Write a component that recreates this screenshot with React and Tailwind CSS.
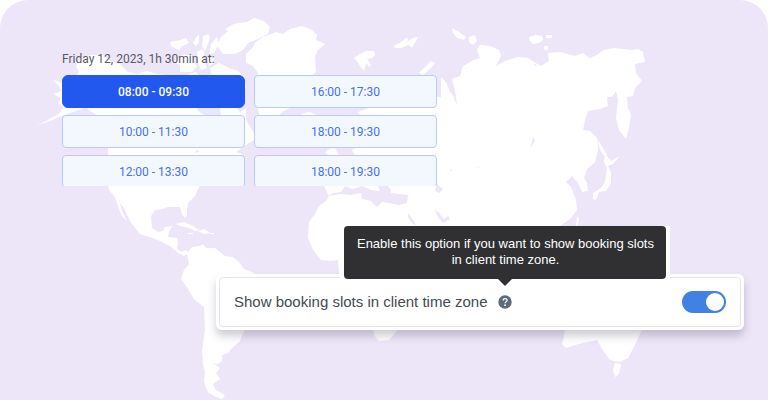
import { useState } from 'react';

const slots = [
  { id: 1, time: '08:00 - 09:30' },
  { id: 2, time: '16:00 - 17:30' },
  { id: 3, time: '10:00 - 11:30' },
  { id: 4, time: '18:00 - 19:30' },
  { id: 5, time: '12:00 - 13:30' },
  { id: 6, time: '18:00 - 19:30' }
];

function WorldMap() {
  return (
    <svg
      viewBox="0 0 768 400"
      preserveAspectRatio="xMinYMin meet"
      className="absolute left-0 top-0 w-full"
      fill="#fff"
      aria-hidden="true"
    >
      {/* North America */}
      <path d="M36 126L46 121 60 113 63 107 58 103 61 99 54 94 61 91 59 86 53 80 60 82 66 84 74 78 79 72 76 66 81 58 91 55 104 55 110 61 120 64 128 72 137 74 147 71 158 74 172 76 184 76 196 72 202 78 211 74 222 77 216 86 206 91 199 100 197 110 204 115 214 120 218 130 222 122 220 110 224 102 234 104 240 112 246 108 246 120 252 130 257 138 246 145 236 152 242 154 238 160 226 166 214 173 205 181 199 187 195 196 188 203 187 209 187 215 185 218 182 214 180 207 168 207 162 209 155 210 151 216 152 228 158 232 163 231 165 227 172 226 169 232 168 237 177 238 178 243 177 249 181 252 186 250 189 253 184 256 177 252 170 246 160 241 150 237 140 234 135 228 130 221 124 208 120 203 122 211 127 221 122 216 118 206 115 197 109 190 107 178 108 160 108 148 110 136 104 124 96 115 86 108 76 111 64 115 50 121z" />
      {/* Arctic islands */}
      <path d="M170 42L181 40 186 38 189 43 182 46 179 50 171 46zM193 43L197 36 199 35 199 42 196 46zM203 36L208 34 210 38 207 46 205 51 202 46zM177 59L184 54 192 56 193 62 197 66 192 72 180 72 180 65 173 62zM197 52L202 49 204 52 204 60 207 68 201 70 198 62zM207 58L214 57 214 63 209 66zM211 44L217 37 219 44 214 53 209 55zM217 46L221 37 228 31 225 29 234 24 247 22 254 18 264 21 270 27 268 34 258 39 248 43 243 50 235 54 223 54zM210 68L219 63 229 68 238 71 244 77 246 86 243 100 236 95 228 90 222 80 212 76z" />
      {/* Greenland and Iceland */}
      <path d="M246 54L252 48 256 42 263 37 276 32 283 34 290 29 302 26 312 30 317 35 316 40 325 44 318 50 315 57 316 72 309 78 306 86 309 96 300 104 288 109 282 112 275 119 266 121 259 114 256 100 255 85 258 73 253 66 246 63zM301 114L309 112 317 115 314 120 306 122z" />
      {/* Svalbard and Novaya Zemlya */}
      <path d="M354 58L360 54 366 51 374 51 375 55 372 58 367 59 371 65 369 67 366 63 364 71 360 66 357 61zM394 46L401 42 406 38 408 38 407 42 413 38 418 37 415 43 412 48 408 45 401 48 395 48zM419 73L426 66 431 61 435 63 430 69 423 75zM441 77L446 82 449 90 454 97 455 105 448 99 441 97z" />
      {/* Caribbean */}
      <path d="M176 224L184 222 193 226 199 230 195 231 189 228 180 226zM198 231L204 229 210 233 204 234zM188 233H193V234H188zM210 233H214V234H210z" />
      {/* South America */}
      <path d="M187 253L192 247 200 246 203 244 206 248 215 248 225 256 233 257 240 263 244 269 254 273 264 280 258 300 250 322 243 333 240 341 232 348 228 353 222 355 222 361 218 364 213 363 220 368 216 373 220 379 213 384 216 390 225 395 222 399 214 396 208 392 204 382 205 372 203 364 202 350 205 330 204 307 194 299 186 286 181 279 184 270 189 264z" />
      {/* Africa, Europe and Asia */}
      <path d="M324 186L336 180 332 172 344 164 356 158 352 150 360 146 372 142 384 130 376 118 362 118 358 112 374 106 388 92 402 84 416 84 424 92 438 97 448 97 452 97 457 104 455 91 452 79 460 76 463 66 472 61 480 58 477 50 480 45 490 46 499 50 501 56 496 66 505 61 518 57 528 58 534 62 541 66 549 61 548 53 560 52 575 56 583 53 590 58 597 55 604 50 614 48 632 50 638 49 643 52 645 62 635 64 636 73 642 81 635 88 633 96 627 97 628 108 631 115 629 127 626 139 619 130 616 118 618 100 616 91 612 97 607 97 608 106 600 109 588 111 585 120 583 130 590 131 597 138 598 150 595 162 587 169 584 178 587 183 588 191 582 192 578 183 572 176 566 182 571 187 576 200 577 210 570 219 560 226 540 240 500 250 440 240 434 262 422 280 418 300 406 318 397 331 389 340 379 341 374 335 371 315 370 290 360 275 339 274 338 260 330 261 321 260 313 250 308 238 309 222 315 214 319 206 326 201 329 196z" />
      {/* British Isles */}
      <path d="M325 153L329 149 335 148 338 154 341 161 334 165 329 163 330 156z" />
      {/* Siberian islands */}
      <path d="M452 28L459 32 466 37 464 40 457 38 453 33zM469 37L475 35 477 41 473 45 469 42zM529 37L536 35 542 36 543 40 539 43 533 44 530 41zM546 35H552V38H546zM544 46H548V50H544z" />
      {/* Sakhalin, Japan and Taiwan */}
      <path d="M597 139L601 145 607 155 605 157 600 150zM605 154L611 161 620 156 613 164 608 166 611 172 611 183 606 191 599 192 596 200 593 199 593 193 601 188 605 182 607 168 604 162zM577 216L579 219 578 224 576 226z" />
      {/* Australia */}
      <path d="M565 325L564 337 562 344 566 348 575 345 583 343 597 340 602 349 610 360 620 362 628 358 635 345 641 332 645 322zM615 363L621 364 619 374 615 377 613 370z" />
      {/* Seas and lakes */}
      <g fill="#ede6f8">
        <path d="M328 196L333 193 341 192 345 186 352 189 362 186 371 190 380 191 377 184 386 184 391 190 391 193 408 195 407 203 399 205 389 203 382 202 377 207 371 201 362 199 361 193 350 195 341 194z" />
        <path d="M408 213L414 221 416 226 411 222 408 217zM435 210L439 213 444 219 448 216 450 219 443 223 438 217zM435 191L437 184 443 189 439 193zM533 136L535 141 530 148 532 142zM197 149L199 152 195 153zM534 49L539 55 535 53z" />
        <path d="M533 63L538 66 535 66zM450 170H452V171H450zM478 167H479V168H478z" />
      </g>
    </svg>
  );
}

function HelpTooltip() {
  return (
    <span className="relative inline-flex">
      <button type="button" aria-label="Help" aria-describedby="timezone-help" className="block">
        <svg viewBox="0 0 14 14" className="block size-3.5" aria-hidden="true">
          <circle cx="7" cy="7" r="6.7" fill="#5d6b79" />
          <path
            d="M5.1 5.5c0-2.7 4-2.5 4-.2 0 1.4-2 1.5-2 3"
            fill="none"
            stroke="#fff"
            strokeWidth="1.3"
          />
          <circle cx="7" cy="10.2" r="0.9" fill="#fff" />
        </svg>
      </button>
      <span className="absolute bottom-full left-1/2 mb-4 w-[330px] -translate-x-1/2 bg-white px-1">
        <span
          id="timezone-help"
          role="tooltip"
          className="block rounded bg-[#303033] px-2 pb-[11px] pt-2.5 text-center text-[13px] leading-4 text-white"
        >
          Enable this option if you want to show booking slots in client time zone.
        </span>
        <span className="absolute left-1/2 top-full -translate-x-1/2 border-x-[7px] border-t-[7px] border-x-transparent border-t-[#303033]" />
      </span>
    </span>
  );
}

export default function App() {
  const [selectedSlot, setSelectedSlot] = useState(1);
  const [clientTimeZone, setClientTimeZone] = useState(true);

  return (
    <main className="relative min-h-screen overflow-hidden rounded-t-[28px] bg-[#ede6f8] font-['Liberation_Sans',Arial,sans-serif]">
      <WorldMap />

      <section className="relative ml-[62px] max-w-[375px] pt-[51px] font-[Roboto,sans-serif]">
        <h1 className="text-[12px] leading-4 text-[#5b5865]">Friday 12, 2023, 1h 30min at:</h1>
        <div className="mt-2 grid max-h-[111px] grid-cols-2 gap-x-[9px] gap-y-[7px] overflow-hidden">
          {slots.map((slot) => (
            <button
              key={slot.id}
              type="button"
              onClick={() => setSelectedSlot(slot.id)}
              className={
                selectedSlot === slot.id
                  ? 'h-[33px] rounded-md border border-[#2358ef] bg-[#2358ef] text-[12px] font-medium text-white'
                  : 'h-[33px] rounded border border-[#b9c9fa] bg-[#f3f8ff] text-[12px] text-[#4a70e8]'
              }
            >
              {slot.time}
            </button>
          ))}
        </div>
      </section>

      <section className="relative ml-[216px] mr-6 mt-[88px] rounded-md bg-white p-[3px] shadow-[0_6px_8px_rgba(60,50,80,0.25)]">
        <div className="flex h-[50px] items-center justify-between rounded border border-[#e5e5e8] px-3.5">
          <div className="flex items-center gap-[11px]">
            <label htmlFor="client-timezone" className="text-[15px] text-[#434b54]">
              Show booking slots in client time zone
            </label>
            <HelpTooltip />
          </div>
          <input
            id="client-timezone"
            type="checkbox"
            role="switch"
            checked={clientTimeZone}
            onChange={(e) => setClientTimeZone(e.target.checked)}
            className="flex h-[22px] w-11 cursor-pointer appearance-none items-center rounded-full bg-slate-300 px-0.5 before:size-[18px] before:rounded-full before:bg-white checked:justify-end checked:bg-[#4081e3]"
          />
        </div>
      </section>
    </main>
  );
}
